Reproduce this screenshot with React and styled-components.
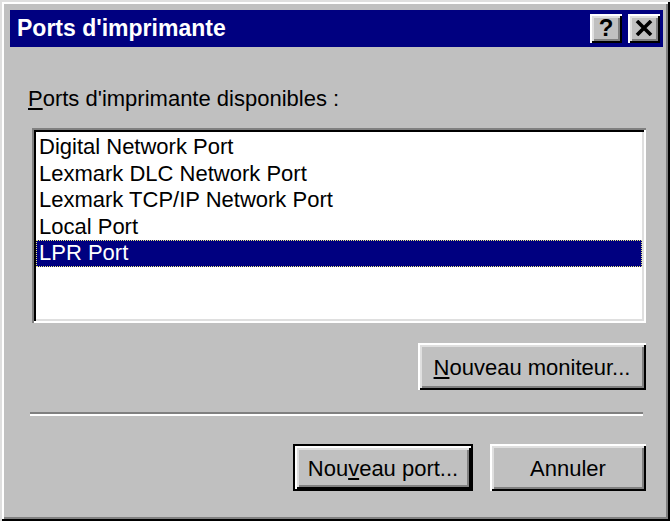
import styled, { createGlobalStyle } from 'styled-components';

const ports = [
    'Digital Network Port',
    'Lexmark DLC Network Port',
    'Lexmark TCP/IP Network Port',
    'Local Port',
    'LPR Port',
];

const App = () => {

    const selected = 'LPR Port';

    return (
        <>
            <GlobalStyle />
            <Window>
                <TitleBar>
                    <Title>Ports d'imprimante</Title>
                    <TitleButtons>
                        <TitleButton>?</TitleButton>
                        <TitleButton>
                            <svg width="18" height="16" viewBox="0 0 18 16">
                                <path d="M2 1 L16 15 M16 1 L2 15" stroke="#000" strokeWidth="3.6" />
                            </svg>
                        </TitleButton>
                    </TitleButtons>
                </TitleBar>

                <Body>
                    <Label>
                        <Mnemonic>P</Mnemonic>orts d'imprimante disponibles :
                    </Label>

                    <ListBox>
                        {ports.map(port => (
                            <ListItem key={port} $selected={port === selected}>
                                {port}
                            </ListItem>
                        ))}
                    </ListBox>

                    <ButtonRow $top={20}>
                        <Button $width={228}>
                            <Mnemonic>N</Mnemonic>ouveau moniteur...
                        </Button>
                    </ButtonRow>

                    <Separator />

                    <ButtonRow $top={28}>
                        <Button $width={180} $default>
                            Nou<Mnemonic>v</Mnemonic>eau port...
                        </Button>
                        <Button $width={156}>Annuler</Button>
                    </ButtonRow>
                </Body>
            </Window>
        </>
    );
}

const GlobalStyle = createGlobalStyle`
    body {
        margin: 0;
        background: #ffffff;
        font-family: "Liberation Sans", Arial, sans-serif;
    }
`

const raised = `
    box-shadow:
        inset 2px 2px #ffffff,
        inset -2px -2px #000000,
        inset 4px 4px #dfdfdf,
        inset -4px -4px #808080;
`

const Window = styled.div`
    width: 670px;
    height: 521px;
    box-sizing: border-box;
    padding: 10px 7px 0 10px;
    background: #c0c0c0;
    box-shadow:
        inset 2px 2px #dfdfdf,
        inset -2px -2px #000000,
        inset 4px 4px #ffffff,
        inset -4px -4px #808080;
`

const TitleBar = styled.div`
    height: 37px;
    background: #000080;
    display: flex;
    align-items: center;
    justify-content: space-between;
    padding: 0 3px 0 7px;
`

const Title = styled.span`
    color: #ffffff;
    font-weight: bold;
    font-size: 23px;
`

const TitleButtons = styled.div`
    display: flex;
    gap: 6px;
`

const TitleButton = styled.div`
    width: 32px;
    height: 29px;
    box-sizing: border-box;
    background: #c0c0c0;
    ${raised}
    display: flex;
    align-items: center;
    justify-content: center;
    font-weight: bold;
    font-size: 24px;
    line-height: 1;
    padding-bottom: 1px;
`

const Body = styled.div`
    display: flex;
    flex-direction: column;
    padding: 40px 17px 0 18px;
`

const Label = styled.div`
    font-size: 22px;
    line-height: 24px;
`

const Mnemonic = styled.u`
    text-decoration: underline;
    text-underline-offset: 2px;
`

const ListBox = styled.div`
    margin: 17px 0 0 4px;
    height: 195px;
    box-sizing: border-box;
    padding: 6px 4px 4px 4px;
    background: #ffffff;
    box-shadow:
        inset 2px 2px #808080,
        inset -2px -2px #ffffff,
        inset 4px 4px #000000,
        inset -4px -4px #dfdfdf;
`

const ListItem = styled.div`
    height: 26.5px;
    line-height: 26.5px;
    box-sizing: border-box;
    padding-left: 3px;
    font-size: 22px;
    white-space: nowrap;
    color: ${props => props.$selected ? '#ffffff' : '#000000'};
    background: ${props => props.$selected ? '#000080' : 'transparent'};
    outline: ${props => props.$selected ? '1px dotted #e8e880' : 'none'};
    outline-offset: -1px;
`

const ButtonRow = styled.div`
    display: flex;
    justify-content: flex-end;
    gap: 17px;
    margin-top: ${props => props.$top}px;
`

const Button = styled.div`
    width: ${props => props.$width}px;
    height: 47px;
    box-sizing: border-box;
    display: flex;
    align-items: center;
    justify-content: center;
    padding-top: 3px;
    font-size: 22px;
    background: #c0c0c0;
    border: ${props => props.$default ? '2px solid #000000' : 'none'};
    ${raised}
`

const Separator = styled.div`
    margin: 22px 3px 0 2px;
    height: 2px;
    background: #808080;
    border-bottom: 2px solid #ffffff;
`

export default App;
